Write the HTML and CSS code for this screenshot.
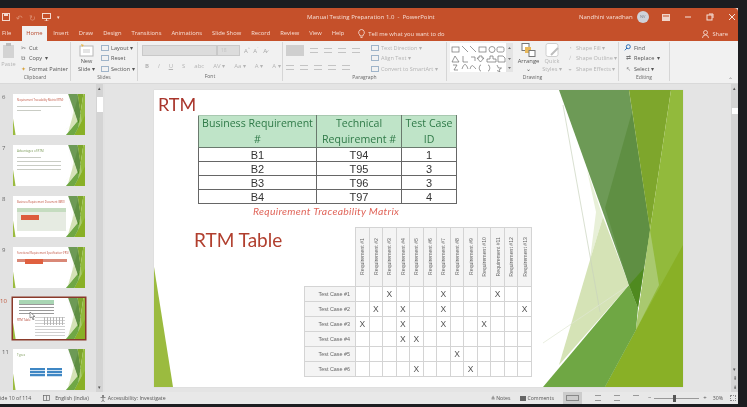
FILE: index.html
```html
<!DOCTYPE html>
<html lang="en">
<head>
  <meta charset="UTF-8">
  <title>Manual Testing Preparation 1.0 - PowerPoint</title>
  <link rel="stylesheet" href="styles.css">
</head>
<body>
  <!-- shared slide background, used by the big slide and the thumbnails -->
  <svg class="defs" width="0" height="0">
    <symbol id="art" viewBox="0 0 529 297" preserveAspectRatio="none">
      <polygon points="0,177 19,297 0,297" fill="#9bbb3f"/>
      <polygon points="433,80 449,127 436,170 442,122" fill="#e8f0d8"/>
      <polygon points="449,127 475,195 405,275 436,170" fill="#d5e3b6"/>
      <polygon points="405,0 475,0 496,140 484,218 475,195" fill="#6d9a56"/>
      <polygon points="478,22 496,140 490,178 475,195 451,118" fill="#5f8f43"/>
      <polygon points="475,0 517,0 496,140" fill="#7ea62c"/>
      <polygon points="517,0 529,0 529,297 451,297 482,240 496,140" fill="#92ba3c"/>
      <polygon points="529,155 529,297 451,297 482,240" fill="#89b026"/>
      <polygon points="389,297 475,195 484,218 482,240 451,297" fill="#6fa744"/>
      <polygon points="496,140 505,195 482,240" fill="#a9c96f"/>
      <polygon points="490,178 475,195 484,218" fill="#4f8a1f"/>
      <line x1="409" y1="15" x2="446" y2="222" stroke="#c9d2bd" stroke-width="0.7"/>
      <line x1="389" y1="253" x2="475" y2="195" stroke="#dfe6d3" stroke-width="0.7"/>
    </symbol>
  </svg>

  <div class="window">
    <div class="titlebar">
      <div class="quick">
        <svg width="8" height="8" viewBox="0 0 8 8"><rect x="0.5" y="0.5" width="7" height="7" fill="none" stroke="#f3d9cf"/><rect x="2" y="0.5" width="4" height="2.5" fill="#f3d9cf"/></svg>
        <span class="quick-dim">↶</span>
        <span class="quick-dim">↻</span>
        <svg width="9" height="8" viewBox="0 0 9 8"><rect x="0.5" y="0.5" width="8" height="5" fill="none" stroke="#f3d9cf"/><path d="M4.5 6v2M2.5 8h4" stroke="#f3d9cf"/></svg>
        <span class="quick-more">▾</span>
      </div>
      <div class="doc-title">Manual Testing Preparation 1.0 &nbsp;-&nbsp; PowerPoint</div>
      <div class="account">
        <span>Nandhini varadhan</span>
        <span class="avatar">NV</span>
        <svg class="opts" width="8" height="7" viewBox="0 0 8 7"><rect width="8" height="7" fill="#f0d5ca"/><path d="M1 2h6" stroke="#c4502a"/></svg>
        <svg class="ctl" width="8" height="8" viewBox="0 0 8 8"><path d="M1 4h6" stroke="#f6e3dc"/></svg>
        <svg class="ctl" width="8" height="8" viewBox="0 0 8 8"><rect x="1" y="2" width="5" height="5" fill="none" stroke="#f6e3dc"/><path d="M3 1h4v4" fill="none" stroke="#f6e3dc"/></svg>
        <svg class="ctl" width="8" height="8" viewBox="0 0 8 8"><path d="M1 1l6 6M7 1l-6 6" stroke="#f6e3dc"/></svg>
      </div>
    </div>

    <div class="tabs">
      <span class="tab tab-file">File</span>
      <span class="tab tab-active">Home</span>
      <span class="tab">Insert</span>
      <span class="tab">Draw</span>
      <span class="tab">Design</span>
      <span class="tab">Transitions</span>
      <span class="tab">Animations</span>
      <span class="tab">Slide Show</span>
      <span class="tab">Record</span>
      <span class="tab">Review</span>
      <span class="tab">View</span>
      <span class="tab">Help</span>
      <span class="tell">
        <svg width="7" height="9" viewBox="0 0 7 9"><path d="M3.5.5a3 3 0 0 1 1.5 5.5v1H2V6A3 3 0 0 1 3.5.5zM2.5 8.5h2" fill="none" stroke="#f6e3dc" stroke-width=".8"/></svg>
        Tell me what you want to do
      </span>
      <span class="share">
        <svg width="7" height="8" viewBox="0 0 7 8"><circle cx="3.5" cy="2.5" r="2" fill="none" stroke="#f6e3dc" stroke-width=".8"/><path d="M.5 8a3 3 0 0 1 6 0" fill="none" stroke="#f6e3dc" stroke-width=".8"/></svg>
        Share
      </span>
    </div>

    <div class="ribbon">
      <div class="group group-clipboard">
        <div class="group-body">
          <div class="big-btn paste">
            <svg width="13" height="15" viewBox="0 0 13 15"><rect x="1" y="2" width="11" height="13" fill="#d3d3d3"/><rect x="4" y="0" width="5" height="3" fill="#bdbdbd"/></svg>
            <span class="off">Paste</span>
          </div>
          <div class="stack">
            <span class="item"><b class="ico">✂</b>Cut</span>
            <span class="item"><b class="ico">⧉</b>Copy &nbsp;▾</span>
            <span class="item"><b class="ico brush">✦</b>Format Painter</span>
          </div>
        </div>
        <div class="group-label">Clipboard</div>
      </div>

      <div class="group group-slides">
        <div class="group-body">
          <div class="big-btn newslide">
            <svg width="15" height="13" viewBox="0 0 15 13"><rect x="1" y="2" width="13" height="10" fill="#fff" stroke="#b8b8b8"/><path d="M4 6h7M4 8h7" stroke="#c9c9c9"/><path d="M2 0l1 3 2-2" fill="#e8b84a"/></svg>
            <span>New</span>
            <span>Slide ▾</span>
          </div>
          <div class="stack">
            <span class="item"><b class="ico box"></b>Layout ▾</span>
            <span class="item"><b class="ico box"></b>Reset</span>
            <span class="item"><b class="ico box"></b>Section ▾</span>
          </div>
        </div>
        <div class="group-label">Slides</div>
      </div>

      <div class="group group-font">
        <div class="group-body body-col">
          <div class="font-row">
            <span class="combo combo-font"></span>
            <span class="combo combo-size">18</span>
            <span class="glyphs">A<sup>^</sup> &nbsp;A<sup>ˇ</sup> &nbsp;&nbsp;A̷</span>
          </div>
          <div class="font-row row-styles off">
            <b>B</b><i>I</i><u>U</u><span>S</span><span>abc</span><span>AV ▾</span><span>Aa ▾</span><span>A ▾</span><span>A ▾</span>
          </div>
        </div>
        <div class="group-label">Font</div>
      </div>

      <div class="group group-para">
        <div class="group-body">
          <div class="para-left">
            <div class="para-row">
              <span class="para-sel"></span>
              <span class="lines"></span><span class="lines"></span><span class="lines"></span><span class="lines"></span>
            </div>
            <div class="para-row">
              <span class="lines"></span><span class="lines"></span><span class="lines"></span><span class="lines"></span><span class="lines"></span>
            </div>
          </div>
          <div class="stack stack-off">
            <span class="item"><b class="ico box"></b>Text Direction ▾</span>
            <span class="item"><b class="ico box"></b>Align Text ▾</span>
            <span class="item"><b class="ico box"></b>Convert to SmartArt ▾</span>
          </div>
        </div>
        <div class="group-label">Paragraph</div>
      </div>

      <div class="group group-drawing">
        <div class="group-body">
          <svg class="gallery" width="63" height="29" viewBox="0 0 63 29">
            <rect width="63" height="29" fill="#fff"/>
            <g fill="none" stroke="#6f6f6f" stroke-width=".7">
              <rect x="2" y="4" width="7" height="5"/><path d="M12 3l6 6M20 3l6 6"/><rect x="29" y="4" width="7" height="5"/><circle cx="42" cy="6.5" r="3"/><rect x="47" y="4" width="7" height="5" rx="1.5"/>
              <path d="M5 13l-3 6h7zM13 13v6h5M21 14h4v4M29 13h3v2h2l-3.500 4-3.500-4h2zM40 13h3v3h3v3h-9v-3h3zM48 13h5l2 2v4h-7z"/>
              <path d="M3 22l4 0-3 5h4M12 26c2-6 4-6 6 0M20 26c2-6 3-3 6 0M31 22c-2 0-1 2-2 3 1 1 0 3 2 3M38 22c2 0 1 2 2 3-1 1 0 3-2 3M47 22l1.500 3h3l-2.500 2 1 2-3-1.500"/>
            </g>
            <rect x="56" width="7" height="29" fill="#e4e4e4"/>
            <path d="M58 6l1.500-2 1.500 2M58 15h3l-1.500 2zM58 24h3l-1.500 2z" fill="#777"/>
          </svg>
          <div class="big-btn arrange">
            <svg width="15" height="14" viewBox="0 0 15 14"><rect x="1" y="0.500" width="7" height="7" fill="#fff" stroke="#777"/><rect x="4" y="4" width="6" height="6" fill="#e9b95a"/><rect x="8" y="7.500" width="6" height="6" fill="#fff" stroke="#777"/></svg>
            <span>Arrange</span>
            <span>⌄</span>
          </div>
          <div class="big-btn quickstyles off">
            <svg width="15" height="14" viewBox="0 0 15 14"><rect x="1" y="0.500" width="12" height="13" rx="2" fill="#fff" stroke="#cfcfcf"/><path d="M6 12l7-7" stroke="#bdbdbd" stroke-width="2"/></svg>
            <span>Quick</span>
            <span>Styles ▾</span>
          </div>
          <div class="stack stack-off">
            <span class="item"><b class="ico">◔</b>Shape Fill ▾</span>
            <span class="item"><b class="ico">∕</b>Shape Outline ▾</span>
            <span class="item"><b class="ico">◒</b>Shape Effects ▾</span>
          </div>
        </div>
        <div class="group-label">Drawing</div>
      </div>

      <div class="group group-editing">
        <div class="group-body">
          <div class="stack">
            <span class="item"><svg class="ico-find" width="7" height="7" viewBox="0 0 7 7"><circle cx="4.300" cy="2.700" r="2" fill="none" stroke="#2f6fb5"/><path d="M3 4L.8 6.300" stroke="#2f6fb5"/></svg>Find</span>
            <span class="item"><b class="ico">⇄</b>Replace &nbsp;▾</span>
            <span class="item"><b class="ico">↖</b>Select ▾</span>
          </div>
        </div>
        <div class="group-label">Editing</div>
      </div>
      <span class="collapse">⌃</span>
    </div>

    <div class="workspace">
      <div class="panel">
        <div class="thumbs">
          <div class="thumb-row">
            <span class="num">6</span>
            <div class="thumb">
              <svg class="thumb-art"><use href="#art"/></svg>
              <div class="t-title">Requirement Traceability Matrix (RTM)</div>
              <div class="t-line"></div><div class="t-line short"></div>
            </div>
          </div>
          <div class="thumb-row">
            <span class="num">7</span>
            <div class="thumb">
              <svg class="thumb-art"><use href="#art"/></svg>
              <div class="t-title t-green">Advantages of RTM</div>
              <div class="t-line short"></div><div class="t-line"></div><div class="t-line"></div><div class="t-line"></div>
            </div>
          </div>
          <div class="thumb-row">
            <span class="num">8</span>
            <div class="thumb">
              <svg class="thumb-art"><use href="#art"/></svg>
              <div class="t-title">Business Requirement Document (BRD)</div>
              <div class="t-table"><span class="t-red"></span></div>
            </div>
          </div>
          <div class="thumb-row">
            <span class="num">9</span>
            <div class="thumb">
              <svg class="thumb-art"><use href="#art"/></svg>
              <div class="t-title">Functional Requirement Specification (FRS)</div>
              <div class="t-bar"><span></span></div>
            </div>
          </div>
          <div class="thumb-row row-current">
            <span class="num">10</span>
            <div class="thumb">
              <svg class="thumb-art"><use href="#art"/></svg>
              <div class="t-greenhead"></div>
              <div class="t-grid"></div>
              <div class="t-lower">
                <span class="t-sub">RTM Table</span>
                <span class="t-matrix"></span>
              </div>
              <svg class="t-cursor" width="7" height="8" viewBox="0 0 7 8"><path d="M1 0v6l2-1 1 3 1-.5-1-3h2z" fill="#fff" stroke="#555" stroke-width=".6"/></svg>
            </div>
          </div>
          <div class="thumb-row">
            <span class="num">11</span>
            <div class="thumb">
              <svg class="thumb-art"><use href="#art"/></svg>
              <div class="t-title t-green">Types</div>
              <div class="t-blue"><span></span><span></span></div>
            </div>
          </div>
        </div>
        <div class="scroll">
          <span class="arrow">▴</span>
          <span class="scroll-thumb thumb-left"></span>
          <span class="arrow arrow-end">▾</span>
        </div>
      </div>

      <div class="stage">
        <div class="slide">
          <svg class="slide-art"><use href="#art"/></svg>
          <div class="slide-body">
            <h1 class="rtm">RTM</h1>
            <table class="rtm-table">
              <tr>
                <th class="c1">Business Requirement #</th>
                <th class="c2">Technical Requirement #</th>
                <th class="c3">Test Case ID</th>
              </tr>
              <tr><td>B1</td><td>T94</td><td>1</td></tr>
              <tr><td>B2</td><td>T95</td><td>3</td></tr>
              <tr><td>B3</td><td>T96</td><td>3</td></tr>
              <tr><td>B4</td><td>T97</td><td>4</td></tr>
            </table>
            <div class="caption">Requirement Traceability Matrix</div>
            <div class="lower">
              <h2 class="rtm-sub">RTM Table</h2>
              <table class="matrix">
                <tr class="matrix-head">
                  <td class="corner"></td>
                  <th><span>Requirement #1</span></th>
                  <th><span>Requirement #2</span></th>
                  <th><span>Requirement #3</span></th>
                  <th><span>Requirement #4</span></th>
                  <th><span>Requirement #5</span></th>
                  <th><span>Requirement #6</span></th>
                  <th><span>Requirement #7</span></th>
                  <th><span>Requirement #8</span></th>
                  <th><span>Requirement #9</span></th>
                  <th><span>Requirement #10</span></th>
                  <th><span>Requirement #11</span></th>
                  <th><span>Requirement #12</span></th>
                  <th><span>Requirement #13</span></th>
                </tr>
                <tr><th class="case">Test Case #1</th><td></td><td></td><td>X</td><td></td><td></td><td></td><td>X</td><td></td><td></td><td></td><td>X</td><td></td><td></td></tr>
                <tr><th class="case">Test Case #2</th><td></td><td>X</td><td></td><td>X</td><td></td><td></td><td>X</td><td></td><td></td><td></td><td></td><td></td><td>X</td></tr>
                <tr><th class="case">Test Case #3</th><td>X</td><td></td><td></td><td>X</td><td></td><td></td><td>X</td><td></td><td></td><td>X</td><td></td><td></td><td></td></tr>
                <tr><th class="case">Test Case #4</th><td></td><td></td><td></td><td>X</td><td>X</td><td></td><td></td><td></td><td></td><td></td><td></td><td></td><td></td></tr>
                <tr><th class="case">Test Case #5</th><td></td><td></td><td></td><td></td><td></td><td></td><td></td><td>X</td><td></td><td></td><td></td><td></td><td></td></tr>
                <tr><th class="case">Test Case #6</th><td></td><td></td><td></td><td></td><td>X</td><td></td><td></td><td></td><td>X</td><td></td><td></td><td></td><td></td></tr>
              </table>
            </div>
          </div>
        </div>
        <div class="scroll scroll-right">
          <span class="arrow">▴</span>
          <span class="scroll-thumb thumb-right"></span>
          <span class="arrow arrow-end">▾</span>
          <span class="arrow">⇞</span>
          <span class="arrow">⇟</span>
        </div>
      </div>
    </div>

    <div class="status">
      <span class="slide-count">ide 10 of 114</span>
      <svg class="st-notes" width="7" height="6" viewBox="0 0 7 6"><rect x=".5" y=".5" width="6" height="5" fill="none" stroke="#666" stroke-width=".7"/><path d="M3.500.5v5" stroke="#666" stroke-width=".7"/></svg>
      <span class="lang">English (India)</span>
      <span class="access"><svg width="6" height="7" viewBox="0 0 6 7"><circle cx="3" cy="1" r="1" fill="#666"/><path d="M.5 2.500h5M3 2.500V5L1.500 7M3 5l1.500 2" stroke="#666" stroke-width=".7" fill="none"/></svg>Accessibility: Investigate</span>
      <span class="status-right">
        <span class="notes">≜ Notes</span>
        <span class="comments"><b class="bubble"></b>Comments</span>
        <span class="view view-on"></span>
        <span class="view"></span>
        <span class="view"></span>
        <span class="view view-last"></span>
        <span class="zoom">−</span>
        <span class="slider"><span class="slider-knob"></span></span>
        <span class="zoom">+</span>
        <span class="pct">30%</span>
        <span class="fit"></span>
      </span>
    </div>
  </div>
</body>
</html>
```

FILE: styles.css
```css
* {
  box-sizing: border-box;
}

html, body {
  margin: 0;
  height: 100%;
  overflow: hidden;
}

body {
  width: 747px;
  height: 407px;
  padding: 8px 9px 3px 0;
  background-color: #1c1d20;
  font-family: 'Open Sans', sans-serif;
  color: #444;
}

.defs {
  display: block;
  height: 0;
}

.window {
  width: 738px;
  height: 396px;
  display: flex;
  flex-direction: column;
  background-color: #e4e4e4;
  filter: blur(0.35px);
}

/* title bar */
.titlebar {
  height: 18px;
  flex: none;
  display: flex;
  align-items: center;
  background-color: #c5502a;
  color: #f6dfd6;
  font-size: 6px;
  border-radius: 0 4px 0 0;
}

.quick {
  width: 307px;
  display: flex;
  align-items: center;
  gap: 6px;
  padding-left: 2px;
  font-size: 8px;
}

.quick-dim {
  color: #dc8d70;
}

.quick-more {
  font-size: 5px;
}

.doc-title {
  width: 272px;
  white-space: nowrap;
}

.account {
  display: flex;
  align-items: center;
  white-space: nowrap;
}

.avatar {
  width: 12px;
  height: 12px;
  margin-left: 4px;
  border-radius: 50%;
  background-color: #cfd2da;
  color: #7d7f88;
  font-size: 4px;
  line-height: 12px;
  text-align: center;
}

.opts {
  margin-left: 13px;
}

.ctl {
  margin-left: 14px;
}

/* tabs */
.tabs {
  height: 15px;
  flex: none;
  display: flex;
  align-items: center;
  background-color: #c5502a;
  color: #f6dfd6;
  font-size: 5.8px;
}

.tab {
  padding: 0 5px;
  white-space: nowrap;
  line-height: 15px;
}

.tab-file {
  padding: 0 11px 0 2px;
}

.tab-active {
  width: 25px;
  padding: 0 4px;
  background-color: #f1f1f1;
  color: #b8482a;
  margin-right: 1px;
}

.tell {
  display: flex;
  align-items: center;
  gap: 3px;
  margin-left: 9px;
  white-space: nowrap;
}

.share {
  display: flex;
  align-items: center;
  gap: 3px;
  margin-left: auto;
  margin-right: 10px;
}

/* ribbon */
.ribbon {
  height: 43px;
  flex: none;
  display: flex;
  position: relative;
  background-color: #f1f1f1;
  border-bottom: 1px solid #d9d9d9;
  font-size: 5.6px;
  color: #555;
}

.group {
  display: flex;
  flex-direction: column;
  border-right: 1px solid #d6d6d6;
  margin: 1px 0 2px;
}

.group-clipboard { width: 71px; }
.group-slides { width: 67px; }
.group-font { width: 145px; }
.group-para { width: 164px; }
.group-drawing { width: 172px; }
.group-editing { width: 51px; }

.group-body {
  height: 31px;
  display: flex;
}

.body-col {
  flex-direction: column;
  gap: 4px;
  padding: 3px 0 0 4px;
}

.group-label {
  height: 9px;
  line-height: 9px;
  text-align: center;
  font-size: 5px;
  color: #666;
}

.big-btn {
  display: flex;
  flex-direction: column;
  align-items: center;
  line-height: 8px;
  white-space: nowrap;
}

.paste {
  width: 17px;
  padding-top: 1px;
  gap: 2px;
}

.newslide {
  width: 25px;
  padding-top: 2px;
}

.off,
.stack-off {
  color: #b4b4b4;
}

.stack {
  display: flex;
  flex-direction: column;
  justify-content: space-between;
  padding: 1px 0 0 2px;
  height: 31px;
  white-space: nowrap;
}

.item {
  display: flex;
  align-items: center;
  height: 9px;
}

.ico {
  width: 8px;
  margin-right: 2px;
  font-weight: normal;
  font-size: 6px;
  color: #777;
  text-align: center;
}

.stack-off .ico {
  color: #c2c2c2;
}

.brush {
  color: #d8a33c;
}

.box {
  height: 6px;
  border: 1px solid #9fb4c9;
}

.ico-find {
  margin-right: 3px;
}

.group-slides .big-btn {
  margin-left: 3px;
}

.font-row {
  display: flex;
  align-items: center;
  height: 11px;
}

.combo {
  height: 11px;
  background-color: #dcdcdc;
  border: 1px solid #c9c9c9;
}

.combo-font {
  width: 75px;
}

.combo-size {
  width: 23px;
  color: #c4c4c4;
  font-size: 5px;
  padding-left: 3px;
  line-height: 9px;
}

.glyphs {
  margin-left: 4px;
  color: #aaa;
  font-size: 6px;
  white-space: nowrap;
}

.glyphs sup {
  font-size: 4px;
}

.row-styles {
  gap: 9px;
  padding-left: 3px;
  font-size: 6px;
  white-space: nowrap;
}

.para-left {
  width: 86px;
  padding: 3px 0 0 3px;
  display: flex;
  flex-direction: column;
  gap: 6px;
}

.para-row {
  display: flex;
  align-items: center;
  gap: 6px;
  height: 11px;
}

.para-sel {
  width: 18px;
  height: 11px;
  background-color: #cfcfcf;
}

.lines {
  width: 8px;
  height: 5px;
  border-top: 1px solid #c4c4c4;
  border-bottom: 1px solid #c4c4c4;
}

.gallery {
  margin: 1px 0 0 3px;
  flex: none;
}

.arrange {
  width: 25px;
  padding-top: 1px;
  margin-left: 3px;
  font-size: 5.8px;
  color: #555;
}

.quickstyles {
  width: 22px;
  padding-top: 1px;
}

.group-drawing .stack {
  margin-left: 1px;
}

.group-editing .stack {
  padding-left: 5px;
}

.collapse {
  position: absolute;
  right: 5px;
  bottom: -1px;
  font-size: 6px;
  color: #888;
}

/* workspace */
.workspace {
  flex: 1;
  min-height: 0;
  display: flex;
}

.panel {
  width: 105px;
  flex: none;
  display: flex;
  background-color: #e2e2e2;
}

.thumbs {
  width: 96px;
  padding-top: 10px;
  display: flex;
  flex-direction: column;
  gap: 10px;
  overflow: hidden;
}

.thumb-row {
  height: 41px;
  flex: none;
  display: flex;
  position: relative;
  padding-left: 13px;
}

.num {
  position: absolute;
  left: 2px;
  top: -1px;
  font-size: 6px;
  color: #666;
}

.row-current .num {
  left: 0;
  color: #c0563a;
}

.thumb {
  width: 72px;
  height: 41px;
  position: relative;
  background-color: #fff;
  padding: 3px 0 0 4px;
}

.row-current .thumb {
  box-shadow: 0 0 0 1.5px #8a3a2a;
}

.thumb-art {
  position: absolute;
  left: 0;
  top: 0;
  width: 72px;
  height: 41px;
}

.t-title {
  position: relative;
  font-size: 2.6px;
  line-height: 5px;
  margin: 1px 0 3px;
  color: #c0523f;
  white-space: nowrap;
}

.t-green {
  color: #7b9a58;
  font-size: 3px;
}

.t-line {
  position: relative;
  width: 44px;
  height: 1px;
  margin-bottom: 3px;
  background-color: #c9ccc4;
}

.t-line.short {
  width: 24px;
}

.t-table {
  position: relative;
  width: 49px;
  height: 23px;
  background-color: #e6ebe2;
  border-top: 4px solid #c5dcc0;
}

.t-red {
  display: block;
  width: 18px;
  height: 5px;
  margin: 3px 0 0 4px;
  background-color: #dd5a3c;
}

.t-bar {
  position: relative;
  width: 50px;
  height: 3px;
  margin-top: 3px;
  background-color: #d98877;
}

.t-bar span {
  display: block;
  width: 18px;
  height: 5px;
  margin-left: 8px;
  background-color: #e0603f;
}

.t-greenhead {
  position: relative;
  width: 35px;
  height: 4px;
  margin: -1px 0 0 2px;
  background-color: #a9d6b4;
}

.t-grid {
  position: relative;
  width: 35px;
  height: 11px;
  margin-left: 2px;
  background: repeating-linear-gradient(180deg, #9a9a9a 0, #9a9a9a 1px, #fff 1px, #fff 3px);
}

.t-lower {
  position: relative;
  display: flex;
  margin-top: 2px;
}

.t-sub {
  width: 18px;
  padding-top: 1px;
  font-size: 2.8px;
  line-height: 4px;
  color: #b13f2e;
  white-space: nowrap;
}

.t-matrix {
  width: 30px;
  height: 20px;
  background:
    repeating-linear-gradient(90deg, #b5b5b5 0, #b5b5b5 1px, transparent 1px, transparent 3px) 9px 0 / 21px 8px no-repeat,
    repeating-linear-gradient(180deg, #d0d0d0 0, #d0d0d0 1px, transparent 1px, transparent 3px);
}

.t-cursor {
  position: absolute;
  left: 16px;
  top: 14px;
}

.t-blue {
  position: relative;
  display: flex;
  gap: 2px;
  width: 34px;
  margin: 10px 0 0 13px;
}

.t-blue span {
  width: 15px;
  height: 9px;
  background: repeating-linear-gradient(180deg, #3f87c4 0, #3f87c4 2px, #cfe2f2 2px, #cfe2f2 3px);
}

/* scroll bars */
.scroll {
  width: 7px;
  flex: none;
  display: flex;
  flex-direction: column;
  align-items: center;
  background-color: #d4d4d4;
  font-size: 5px;
  color: #555;
}

.arrow {
  height: 9px;
  line-height: 9px;
}

.arrow-end {
  margin-top: auto;
}

.scroll-thumb {
  width: 6px;
  background-color: #fff;
}

.thumb-left {
  height: 15px;
  margin-top: 4px;
}

.thumb-right {
  height: 6px;
  margin-top: 15px;
}

/* main slide */
.stage {
  flex: 1;
  display: flex;
  justify-content: space-between;
  background-color: #e4e4e4;
  padding-left: 49px;
}

.slide {
  width: 529px;
  height: 297px;
  margin-top: 6px;
  position: relative;
  background-color: #fff;
  box-shadow: 0 0 1px #c8c8c8;
}

.slide-art {
  position: absolute;
  left: 0;
  top: 0;
  width: 529px;
  height: 297px;
}

.slide-body {
  position: relative;
}

.rtm {
  margin: 0;
  height: 25px;
  padding: 2px 0 0 4px;
  font-family: 'Lato', sans-serif;
  font-size: 18px;
  line-height: 24px;
  font-weight: 400;
  color: #a9362c;
}

.rtm-table {
  margin-left: 44px;
  border-collapse: collapse;
  table-layout: fixed;
  width: 258px;
  font-family: 'Liberation Sans', sans-serif;
  font-size: 11px;
  color: #333;
  text-align: center;
}

.rtm-table th {
  height: 31px;
  padding: 0 2px;
  background-color: #bfe4c8;
  color: #2f7a48;
  font-family: 'Open Sans', sans-serif;
  font-size: 10.6px;
  font-weight: 400;
  line-height: 15.5px;
  border: 1px solid #6a7a6e;
  border-top-color: #a8c8b0;
}

.rtm-table td {
  height: 14px;
  padding: 0;
  line-height: 12px;
  border: 1px solid #666;
}

.rtm-table .c1 { width: 118px; }
.rtm-table .c2 { width: 85px; }
.rtm-table .c3 { width: 55px; }

.caption {
  height: 23px;
  padding: 1px 0 0 99px;
  font-family: 'Lato', sans-serif;
  font-style: italic;
  font-size: 10.4px;
  line-height: 13px;
  letter-spacing: 0.3px;
  color: #e0655a;
  white-space: nowrap;
}

.lower {
  display: flex;
}

.rtm-sub {
  width: 150px;
  margin: 1px 0 0;
  padding-left: 40px;
  font-family: 'Lato', sans-serif;
  font-size: 19px;
  line-height: 24px;
  font-weight: 400;
  color: #b13f2e;
  white-space: nowrap;
}

.matrix {
  border-collapse: collapse;
  table-layout: fixed;
  width: 228px;
  font-family: 'Liberation Sans', sans-serif;
  color: #555;
}

.matrix th,
.matrix td {
  padding: 0;
  border: 1px solid #d4d4d4;
  font-weight: 400;
}

.matrix td {
  width: 13.65px;
  height: 15px;
  font-size: 8.5px;
  line-height: 8px;
  text-align: center;
  background-color: #fff;
}

.matrix-head th {
  height: 59px;
  background-color: #f4f4f4;
  font-size: 5.2px;
  color: #666;
}

.matrix-head th span {
  display: inline-block;
  writing-mode: vertical-rl;
  transform: rotate(180deg);
  white-space: nowrap;
}

.matrix .corner {
  width: 51px;
  border: 0;
  border-right: 1px solid #d4d4d4;
  background: none;
}

.matrix .case {
  width: 51px;
  padding-right: 5px;
  background-color: #f4f4f4;
  font-size: 5.4px;
  color: #666;
  text-align: right;
  white-space: nowrap;
}

/* status bar */
.status {
  height: 12px;
  flex: none;
  display: flex;
  align-items: center;
  background-color: #e8e8e8;
  font-size: 5.2px;
  color: #555;
  white-space: nowrap;
  overflow: hidden;
}

.st-notes {
  margin-left: 12px;
}

.lang {
  margin-left: 5px;
}

.access {
  display: flex;
  align-items: center;
  gap: 2px;
  margin-left: 11px;
}

.status-right {
  margin-left: auto;
  display: flex;
  align-items: center;
  height: 12px;
}

.comments {
  display: flex;
  align-items: center;
  gap: 1px;
  margin-left: 10px;
}

.bubble {
  width: 6px;
  height: 5px;
  background-color: #666;
}

.view {
  width: 6px;
  height: 6px;
  margin-left: 13px;
  border: 1px solid #999;
  border-left: 0;
  border-right: 0;
}

.view-on {
  width: 19px;
  height: 12px;
  margin-left: 9px;
  background-color: #cccccc;
  border: 3px solid #cccccc;
  box-shadow: inset 0 0 0 1px #888;
}

.view-last {
  border-bottom: 0;
}

.zoom {
  margin-left: 9px;
  font-size: 6px;
}

.slider {
  width: 45px;
  height: 1px;
  margin-left: 3px;
  position: relative;
  background-color: #999;
}

.slider-knob {
  position: absolute;
  left: 19px;
  top: -3px;
  width: 3px;
  height: 7px;
  background-color: #555;
}

.zoom + .slider + .zoom {
  margin-left: 4px;
}

.pct {
  margin-left: 6px;
}

.fit {
  width: 6px;
  height: 6px;
  margin: 0 2px 0 7px;
  border: 1px dotted #888;
}
```
